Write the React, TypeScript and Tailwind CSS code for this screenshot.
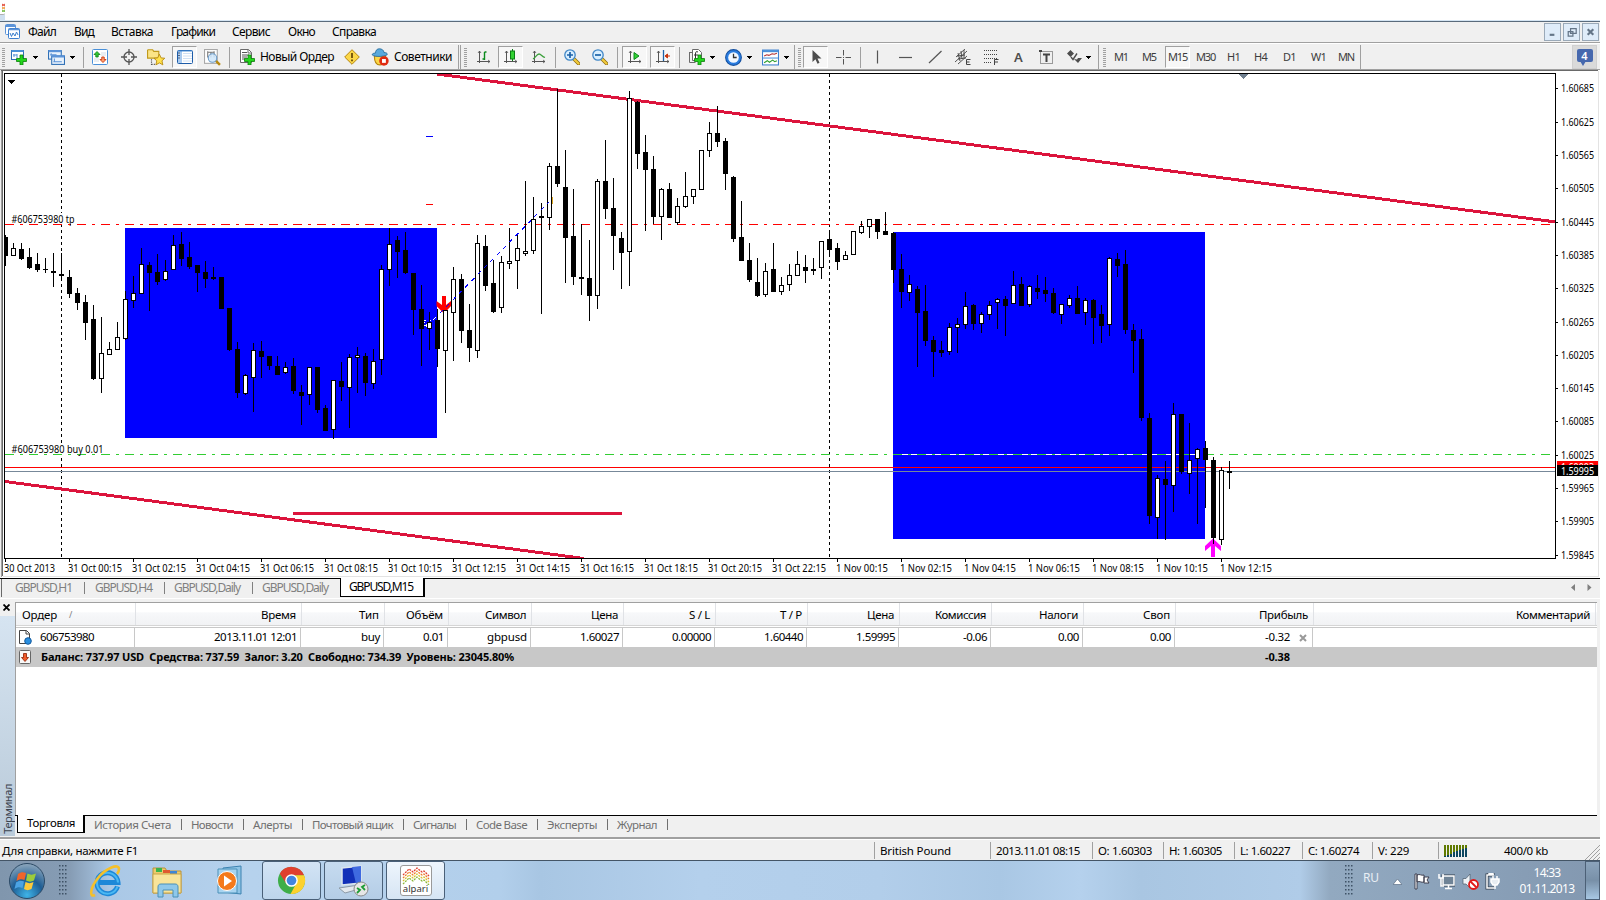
import { useLayoutEffect, useRef, useState } from 'react'
import type { ReactNode } from 'react'
import clsx from 'clsx'

type Candle = [number, number, number, number, number]

// high, body top, body bottom, low, 1 = bullish
const CANDLES: Candle[] = [
	[235, 237, 256, 266, 0], [243, 248, 256, 256, 1], [243, 249, 259, 260, 0], [248, 257, 268, 269, 0], [253, 264, 270, 272, 0],
	[258, 269, 270, 273, 0], [253, 271, 273, 287, 0], [253, 274, 276, 280, 0], [270, 277, 294, 298, 0], [288, 293, 303, 310, 0],
	[295, 302, 323, 340, 0], [305, 319, 379, 380, 0], [317, 353, 379, 393, 1], [342, 349, 355, 355, 1], [322, 337, 350, 350, 1],
	[291, 299, 339, 340, 1], [276, 293, 301, 308, 1], [248, 264, 294, 294, 1], [262, 265, 273, 311, 0], [254, 272, 282, 285, 0],
	[260, 271, 280, 281, 1], [235, 245, 270, 270, 1], [232, 244, 259, 266, 0], [242, 257, 267, 269, 0], [265, 265, 273, 292, 0],
	[261, 272, 279, 288, 0], [267, 277, 279, 280, 0], [277, 277, 309, 309, 0], [308, 308, 350, 351, 0], [342, 349, 393, 398, 0],
	[374, 375, 394, 395, 1], [343, 350, 378, 412, 1], [341, 351, 357, 378, 0], [356, 356, 366, 370, 0], [356, 366, 375, 375, 0],
	[362, 367, 373, 374, 1], [358, 366, 391, 394, 0], [385, 392, 396, 425, 0], [367, 367, 395, 405, 1], [367, 367, 410, 413, 0],
	[405, 408, 431, 431, 0], [380, 380, 430, 439, 1], [362, 381, 387, 401, 0], [354, 357, 388, 428, 1], [347, 355, 358, 393, 1],
	[353, 356, 383, 396, 0], [349, 361, 384, 389, 1], [265, 269, 360, 375, 1], [228, 244, 270, 286, 1], [236, 240, 252, 278, 0],
	[232, 250, 273, 274, 0], [273, 273, 310, 335, 0], [285, 309, 329, 366, 0], [312, 322, 329, 350, 1], [309, 320, 349, 367, 0],
	[310, 310, 351, 413, 1], [267, 279, 313, 361, 1], [274, 279, 331, 343, 0], [304, 330, 348, 362, 0], [235, 243, 351, 358, 1],
	[235, 246, 286, 291, 0], [260, 283, 312, 313, 0], [256, 262, 308, 313, 1], [228, 261, 264, 269, 1], [235, 248, 261, 289, 1],
	[181, 251, 254, 256, 1], [197, 219, 251, 254, 1], [203, 216, 218, 314, 0], [163, 166, 218, 230, 1], [89, 166, 184, 187, 0],
	[150, 187, 238, 283, 0], [189, 236, 277, 285, 0], [224, 277, 279, 295, 0], [240, 278, 296, 321, 0], [179, 181, 296, 309, 1],
	[140, 181, 209, 219, 0], [178, 208, 236, 270, 0], [232, 238, 253, 289, 0], [91, 98, 252, 286, 1], [101, 102, 154, 169, 0],
	[135, 152, 170, 231, 0], [156, 169, 217, 224, 0], [188, 189, 217, 240, 1], [183, 189, 218, 218, 0], [198, 206, 223, 225, 1],
	[172, 196, 207, 208, 1], [189, 189, 197, 204, 1], [150, 150, 190, 190, 1], [122, 133, 151, 157, 1], [106, 133, 142, 147, 0],
	[138, 141, 174, 190, 0], [176, 177, 239, 242, 0], [201, 237, 261, 261, 0], [243, 260, 280, 282, 0], [258, 282, 296, 297, 0],
	[263, 271, 295, 297, 1], [243, 269, 292, 292, 0], [277, 285, 292, 295, 1], [264, 275, 285, 291, 1], [251, 264, 276, 276, 1],
	[255, 267, 271, 283, 0], [258, 269, 271, 275, 0], [241, 241, 268, 279, 1], [230, 239, 250, 255, 0], [243, 248, 262, 270, 0],
	[251, 255, 260, 260, 1], [231, 231, 255, 255, 1], [221, 226, 233, 234, 1], [219, 219, 227, 238, 1], [219, 219, 232, 239, 0],
	[212, 231, 235, 235, 0], [232, 233, 270, 283, 0], [254, 269, 292, 308, 0], [275, 284, 293, 301, 1], [286, 289, 313, 367, 0],
	[285, 311, 341, 346, 0], [336, 340, 352, 377, 0], [341, 350, 353, 357, 0], [323, 327, 352, 355, 1], [318, 324, 328, 353, 1],
	[292, 306, 325, 329, 1], [304, 305, 324, 330, 0], [312, 314, 324, 333, 1], [301, 305, 315, 320, 1], [298, 299, 303, 329, 1],
	[296, 299, 306, 336, 0], [271, 285, 304, 304, 1], [277, 284, 306, 306, 0], [285, 286, 305, 307, 1], [275, 288, 292, 299, 0],
	[277, 290, 294, 302, 0], [288, 293, 313, 314, 0], [304, 304, 315, 324, 1], [295, 298, 306, 308, 1], [286, 298, 314, 314, 0],
	[298, 300, 313, 325, 1], [299, 300, 318, 344, 0], [305, 314, 326, 343, 0], [257, 258, 325, 336, 1], [253, 259, 266, 277, 0],
	[250, 264, 330, 334, 0], [324, 330, 341, 373, 0], [329, 339, 418, 421, 0], [413, 418, 516, 524, 0], [475, 478, 518, 539, 1],
	[461, 479, 485, 540, 0], [403, 414, 486, 512, 1], [414, 414, 472, 474, 0], [423, 460, 474, 494, 1], [448, 449, 459, 524, 1],
	[441, 448, 460, 508, 0], [457, 460, 538, 544, 0], [467, 470, 540, 545, 1], [461, 471, 473, 489, 0]
]

const PRICES: [string, number][] = [
	['1.60685', 88], ['1.60625', 122], ['1.60565', 155], ['1.60505', 188], ['1.60445', 222], ['1.60385', 255], ['1.60325', 288],
	['1.60265', 322], ['1.60205', 355], ['1.60145', 388], ['1.60085', 421], ['1.60025', 455], ['1.59965', 488], ['1.59905', 521], ['1.59845', 555]
]

const TIMES = [
	'30 Oct 2013', '31 Oct 00:15', '31 Oct 02:15', '31 Oct 04:15', '31 Oct 06:15', '31 Oct 08:15', '31 Oct 10:15', '31 Oct 12:15', '31 Oct 14:15', '31 Oct 16:15',
	'31 Oct 18:15', '31 Oct 20:15', '31 Oct 22:15', '1 Nov 00:15', '1 Nov 02:15', '1 Nov 04:15', '1 Nov 06:15', '1 Nov 08:15', '1 Nov 10:15', '1 Nov 12:15'
]

// Text that is tracked in or out until it takes exactly w pixels
function Label({ w, children, className }: { w: number; children: string; className?: string }) {
	const ref = useRef<HTMLSpanElement>(null)
	const [spacing, setSpacing] = useState(0)

	useLayoutEffect(() => {
		if (!ref.current) return
		const natural = ref.current.getBoundingClientRect().width
		setSpacing((w - natural) / children.length)
	}, [w, children])

	return (
		<span className={clsx('block shrink-0 whitespace-pre', className)} style={{ width: w }}>
			<span ref={ref} style={{ letterSpacing: spacing }}>
				{children}
			</span>
		</span>
	)
}

function Grip() {
	return (
		<svg width="3" height="19" className="shrink-0" shapeRendering="crispEdges">
			{Array.from({ length: 10 }, (_, i) => (
				<rect key={i} y={i * 2} width="3" height="1" fill="#a0a0a0" />
			))}
		</svg>
	)
}

function Divider({ className }: { className?: string }) {
	return <div className={clsx('h-[21px] w-px shrink-0 bg-[#a0a0a0]', className)} />
}

function Caret({ className }: { className?: string }) {
	return (
		<svg width="5" height="3" className={clsx('shrink-0', className)} shapeRendering="crispEdges">
			<path d="M0 0h5v1H0zM1 1h3v1H1zM2 2h1v1H2z" />
		</svg>
	)
}

function Icon({ className, children, size = 16 }: { className?: string; children: ReactNode; size?: number }) {
	return (
		<svg width={size} height={size} viewBox="0 0 16 16" fill="none" className={clsx('shrink-0', className)}>
			{children}
		</svg>
	)
}

function Pressed({ className, children }: { className?: string; children: ReactNode }) {
	return (
		<div
			className={clsx(
				'flex h-[22px] w-[25px] shrink-0 items-center justify-center border border-r-white border-b-white border-l-[#a0a0a0] border-t-[#a0a0a0] bg-[#f7f7f7]',
				className
			)}
		>
			{children}
		</div>
	)
}

const Plus = () => <path d="M9 6h3v3.500h3.500v3H12V16H9v-3.500H5.500v-3H9z" fill="#23d51c" stroke="#0a7d0a" strokeWidth=".8" />

const Axes = () => (
	<>
		<path d="M3.500 2v12M1 12.500h13" stroke="#555" />
		<path d="M2 4l1.500-2L5 4M12 11l2 1.500L12 14" stroke="#555" strokeWidth=".8" />
	</>
)

function ZoomIcon({ plus, className }: { plus?: boolean; className?: string }) {
	return (
		<Icon className={className}>
			<path d="M10 10l4.500 4.500" stroke="#8a6a14" strokeWidth="3.600" strokeLinecap="round" />
			<path d="M10 10l4.500 4.500" stroke="#f2cb3c" strokeWidth="2.200" strokeLinecap="round" />
			<circle cx="6" cy="6" r="5.200" fill="#d9efff" stroke="#3f86c6" strokeWidth="1.300" />
			<path d={plus ? 'M6 3v6M3 6h6' : 'M3 6h6'} stroke="#1c62a8" strokeWidth="1.700" />
		</Icon>
	)
}

function MenuBar() {
	return (
		<div className="flex h-5 items-center bg-[#f0f0f0] text-[12px] leading-5 text-black">
			<svg width="15" height="15" viewBox="0 0 15 15" fill="none" className="-mt-px ml-[5px]">
				<rect x=".5" y=".5" width="10" height="10" rx="1" fill="#fff" stroke="#5b93d8" />
				<path d="M.5 2h10" stroke="#5b93d8" strokeWidth="2" />
				<rect x="3.500" y="4.500" width="11" height="10" rx="1" fill="#fff" stroke="#3d7fce" />
				<path d="M3.500 5.500h11" stroke="#5b93d8" strokeWidth="1.500" />
				<path d="M5 9l1.500 3.500L8 9l2 3 1.500-4L13 11" stroke="#3d7fce" />
			</svg>
			<Label w={28} className="ml-[8px]">Файл</Label>
			<Label w={20} className="ml-[18px]">Вид</Label>
			<Label w={42} className="ml-[17px]">Вставка</Label>
			<Label w={44} className="ml-[18px]">Графики</Label>
			<Label w={38} className="ml-[17px]">Сервис</Label>
			<Label w={27} className="ml-[18px]">Окно</Label>
			<Label w={44} className="ml-[17px]">Справка</Label>
			<div className="ml-auto mr-px flex gap-[2px]">
				{['M5 11h5', 'M7 4.500h6v5H7zM4.500 7.500h5v5h-5z', 'M5 5l6 6M11 5l-6 6'].map((d, i) => (
					<div key={d} className="h-[18px] w-[17px] border border-[#9aa9b8] bg-[#dfecf9]">
						<svg width="15" height="16" viewBox="0 0 16 16" fill="none">
							<path d={d} stroke="#647587" strokeWidth={i === 1 ? 1.300 : 2.300} />
						</svg>
					</div>
				))}
			</div>
		</div>
	)
}

function Toolbar() {
	return (
		<div className="flex h-[25px] items-center bg-[#f0f0f0] pt-px text-[12px]">
			<div className="ml-[2px] flex"><Grip /></div>
			<Icon className="ml-[6px]">
				<rect x=".5" y="1.500" width="12" height="9" fill="#fff" stroke="#2f6fb5" />
				<path d="M.5 2h12" stroke="#4a90d9" strokeWidth="2" />
				<path d="M3 8V5M6 9V5M2 6h4" stroke="#5b93d8" />
				<Plus />
			</Icon>
			<Caret className="ml-[6px]" />
			<Icon size={17} className="ml-[10px]">
				<rect x=".5" y="1.500" width="12" height="8" fill="#e8f2fc" stroke="#2f6fb5" />
				<path d="M.5 2h12" stroke="#5b93d8" strokeWidth="2" />
				<rect x="3.500" y="6.500" width="12" height="8" fill="#e8f2fc" stroke="#2f6fb5" />
				<path d="M3.500 7h12" stroke="#5b93d8" strokeWidth="2" />
				<path d="M3 6V4M2 5.500h6M6 12V9M5 12h8" stroke="#5b93d8" />
			</Icon>
			<Caret className="ml-[5px]" />
			<Divider className="ml-[8px]" />
			<Icon className="ml-[8px]">
				<rect x=".5" y=".5" width="15" height="15" rx="1" fill="#fff" stroke="#4a90d9" />
				<path d="M9 4h5M9 6h5M2 10h5M2 12h5" stroke="#d4dde6" />
				<path d="M5 2.500L8 5.500H6.200V8H3.800V5.500H2z" fill="#32c832" stroke="#0b7d14" strokeWidth=".8" />
				<path d="M11 13.500L8 10.500h1.800V8h2.400v2.500H14z" fill="#ffa070" stroke="#c8340c" strokeWidth=".9" />
			</Icon>
			<Icon className="ml-[13px]">
				<circle cx="8" cy="8" r="5" stroke="#555" strokeWidth="1.300" />
				<path d="M8 0v6M8 10v6M0 8h6M10 8h6" stroke="#555" strokeWidth="1.300" />
			</Icon>
			<Icon size={18} className="ml-[10px]">
				<path d="M.5 2V9h10V3H6L5 1.500H1z" fill="#fbe487" stroke="#c09a1c" />
				<path d="M4 10v5M4 14.500h4" stroke="#555" strokeDasharray="1 1" />
				<path d="M11 5.500l1.500 3.300 3.300.3-2.500 2.300.8 3.600-3.100-1.800L7.900 15l.8-3.600-2.500-2.300 3.300-.3z" fill="#ffe14d" stroke="#b88a10" strokeWidth=".8" />
			</Icon>
			<Pressed className="ml-[7px]">
				<Icon>
					<rect x=".5" y="1.500" width="15" height="13" rx="1" fill="#fff" stroke="#1d5ca8" />
					<path d="M1 2h4v12H1z" fill="#a9cbf0" />
					<path d="M1 2h14" stroke="#4a90d9" />
					<path d="M1.500 4h1M1.500 6.500h1M1.500 9h1" stroke="#001" />
					<path d="M6 4.500h9M6 7h9M6 9.500h9M6 12h9" stroke="#cfe0f4" />
				</Icon>
			</Pressed>
			<Icon size={17} className="ml-[7px]">
				<rect x=".5" y=".5" width="12" height="13" fill="#fff" stroke="#a8a8a8" />
				<path d="M3.500 2v6M6.500 3v5M9.500 2v6M3 3h7" stroke="#777" />
				<path d="M11 11l4 4" stroke="#b88a10" strokeWidth="2.400" />
				<circle cx="8" cy="8.500" r="4" fill="#cfe6fa" fillOpacity=".85" stroke="#6b9bc8" />
			</Icon>
			<Divider className="ml-[8px]" />
			<Icon className="ml-[9px]">
				<path d="M1.500.5h8l3 3v10h-11z" fill="#fff" stroke="#6b6b6b" />
				<path d="M9 .5v3.500h3.500" stroke="#6b6b6b" />
				<path d="M3 3.500h5M3 6h7M3 8h5M3 10h3" stroke="#555" />
				<Plus />
			</Icon>
			<Label w={74} className="ml-[5px]">Новый Ордер</Label>
			<Icon className="ml-[10px]">
				<path d="M8 .7L15.300 8 8 15.300.7 8z" fill="#fbd748" stroke="#b8860b" />
				<path d="M8 4v5M8 10.500v1.700" stroke="#5a3c00" strokeWidth="1.600" />
			</Icon>
			<Icon size={18} className="ml-[11px]">
				<path d="M3 7c0 5 2 8 5 8s5-3 5-8z" fill="#fbd748" stroke="#b8860b" />
				<path d="M1 6c0-1 1.500-1.500 3-1.500C4 2 5.500.7 7.500.7s4 1.300 4 3.300c2 0 3 .8 3 1.500C14.500 7.500 3 8.500 1 6z" fill="#5aa9dc" stroke="#2a6f9f" strokeWidth=".8" />
				<circle cx="11.500" cy="11.500" r="4.200" fill="#e02a10" />
				<rect x="9.800" y="9.800" width="3.400" height="3.400" fill="#fff" />
			</Icon>
			<Label w={58} className="ml-[5px]">Советники</Label>
			<div className="ml-[6px] flex h-[25px] w-[3px] justify-between">
				<div className="w-px bg-[#a0a0a0]" />
				<div className="w-px bg-[#a0a0a0]" />
			</div>
			<div className="ml-[3px] flex"><Grip /></div>
			<Icon className="ml-[9px]">
				<Axes />
				<path d="M8.500 3v8M10.500 3H8.500M6.500 10h2" stroke="#0b8a1c" strokeWidth="1.400" />
			</Icon>
			<Pressed className="ml-[6px]">
				<Icon>
					<Axes />
					<path d="M9.500 0v12" stroke="#0b7d14" />
					<rect x="7.500" y="2" width="4" height="8" fill="#32d232" stroke="#0b7d14" />
				</Icon>
			</Pressed>
			<Icon className="ml-[8px]">
				<Axes />
				<path d="M2 10c2-1 4-5 6-5s3 2.500 6 3.500" stroke="#3aa03a" strokeWidth="1.300" />
			</Icon>
			<Divider className="ml-[8px]" />
			<ZoomIcon plus className="ml-[8px]" />
			<ZoomIcon className="ml-[12px]" />
			<Divider className="ml-[9px]" />
			<Pressed className="ml-[4px]">
				<Icon>
					<Axes />
					<path d="M7 3.500v7l5-3.500z" fill="#32d232" stroke="#0b8a1c" />
				</Icon>
			</Pressed>
			<Pressed className="ml-[3px]">
				<Icon>
					<Axes />
					<path d="M8.500 1v11" stroke="#1c62a8" strokeWidth="1.300" />
					<path d="M15 7h-3M12.500 5L10 7l2.500 2z" fill="#c8340c" stroke="#c8340c" />
				</Icon>
			</Pressed>
			<Divider className="ml-[4px]" />
			<Icon className="ml-[9px]">
				<path d="M3.500.5h6l3 3v8h-9z" fill="#fff" stroke="#6b6b6b" />
				<path d="M.5 3.500h3M.5 3v10.500h6" stroke="#6b6b6b" />
				<path d="M9 3c-2-1-2.500 0-2.500 2v5M5 6h4" stroke="#333" />
				<Plus />
			</Icon>
			<Caret className="ml-[5px]" />
			<Icon size={17} className="ml-[10px]">
				<circle cx="8" cy="8" r="7.400" fill="#2a7de0" stroke="#1450a0" />
				<circle cx="8" cy="8" r="5" fill="#f2f8ff" />
				<path d="M8 4.500V8h3" stroke="#333" strokeWidth="1.200" />
			</Icon>
			<Caret className="ml-[5px]" />
			<Icon size={17} className="ml-[10px]">
				<rect x=".5" y="1" width="15" height="14" fill="#fff" stroke="#3d7fce" />
				<path d="M.5 2h15" stroke="#4a90d9" strokeWidth="2" />
				<path d="M1 8.500h14" stroke="#4a90d9" />
				<path d="M2 6.500l2.500-1 2 .5 3-1.500 2 .5 2.500-1" stroke="#b03030" />
				<path d="M2 13l3-2 2 1.500 3-2 2 1.500 2-1" stroke="#2f9f2f" />
			</Icon>
			<Caret className="ml-[5px]" />
			<div className="ml-[5px] h-[25px] w-px bg-[#a0a0a0]" />
			<div className="ml-[3px] flex"><Grip /></div>
			<Pressed className="ml-[2px]">
				<Icon>
					<path d="M4.500 1v12l3-2.800 2 4.500 2-1-2-4.200h4z" fill="#4d4d4d" />
				</Icon>
			</Pressed>
			<Icon className="ml-[7px]">
				<path d="M8.500 1v5.500M8.500 10v5.500M1 8.500h5.500M10.500 8.500H16" stroke="#555" />
				<path d="M8 8h1v1H8z" fill="#555" />
			</Icon>
			<Divider className="ml-[9px]" />
			<Icon className="ml-[8px]">
				<path d="M8.500 1.500v13" stroke="#555" strokeWidth="1.200" />
			</Icon>
			<Icon className="ml-[13px]">
				<path d="M1 8.500h13" stroke="#555" strokeWidth="1.200" />
			</Icon>
			<Icon className="ml-[14px]">
				<path d="M1 14L13.500 2" stroke="#555" strokeWidth="1.200" />
			</Icon>
			<svg width="16" height="16" className="ml-[11px] shrink-0" fill="none" stroke="#444">
				<path d="M0 13L12 2M1 8l9-8M3 15l9-8M3 4l2 8M6 2l1 8M9 1v8M2 7l8-1M3 10l8-1" strokeWidth=".9" />
				<path d="M15.500 10.500h-4v5h4M11.500 13h3" />
			</svg>
			<svg width="16" height="16" className="ml-[13px] shrink-0" fill="none" stroke="#444">
				<path d="M0 1.500h14M0 5.500h14M0 9.500h14M0 13.500h8" strokeDasharray="1 1" />
				<path d="M14.500 10.500h-4v5.500M10.500 13h3.500" />
			</svg>
			<div className="ml-[14px] w-[11px] text-[13px] font-semibold leading-4 text-[#4d4d4d]">A</div>
			<svg width="15" height="16" className="ml-[14px] shrink-0" fill="none" stroke="#444">
				<rect x="1.500" y="2.500" width="12" height="12" strokeDasharray="1 1" />
				<path d="M4 5.500h7M7.500 5v8" strokeWidth="2" />
				<path d="M0 1h3v2H0z" fill="#444" stroke="none" />
			</svg>
			<svg width="15" height="16" className="ml-[13px] shrink-0" fill="#4d4d4d">
				<path d="M3.500 1L7 4.500 3.500 8 0 4.500zM11 9h4l-4 5-4-4 3 .5z" />
				<path d="M4 8l2 2.500 4-6" fill="none" stroke="#4d4d4d" strokeWidth="1.400" />
			</svg>
			<Caret className="ml-[4px]" />
			<div className="ml-[7px] h-[25px] w-px bg-[#a0a0a0]" />
			<div className="ml-[4px] flex"><Grip /></div>
			<div className="flex items-center text-[11px] text-[#3c3c3c]">
				<Label w={14} className="ml-[8px]">M1</Label>
				<Label w={14} className="ml-[14px]">M5</Label>
				<Pressed className="ml-[9px]"><Label w={19}>M15</Label></Pressed>
				<Label w={19} className="ml-[6px]">M30</Label>
				<Label w={13} className="ml-[12px]">H1</Label>
				<Label w={13} className="ml-[14px]">H4</Label>
				<Label w={13} className="ml-[16px]">D1</Label>
				<Label w={15} className="ml-[15px]">W1</Label>
				<Label w={16} className="ml-[12px]">MN</Label>
			</div>
			<div className="ml-[6px] h-[25px] w-px bg-[#a0a0a0]" />
			<div className="ml-auto mr-[3px] h-[24px] w-[25px] border border-[#d0d0d0] bg-[#dadada]">
				<div className="relative mx-auto mt-[3px] h-[13px] w-[16px] rounded-[2px] bg-[#4668ae] text-center text-[11px] font-semibold leading-[13px] text-white">
					4
					<svg width="6" height="5" className="absolute left-[3px] top-[12px]"><path d="M0 0h6L3 5z" fill="#4668ae" /></svg>
				</div>
			</div>
		</div>
	)
}

function Chart() {
	return (
		<svg width="1600" height="509" viewBox="0 70 1600 509" className="block shrink-0" shapeRendering="crispEdges" fontSize="10.500">
			<rect x="0" y="70" width="1600" height="509" fill="#fff" />
			<rect x="0" y="70" width="1" height="508" fill="#f0f0f0" />
			<rect x="1" y="70" width="1" height="507" fill="#a0a0a0" />
			<rect x="2" y="70" width="1" height="506" fill="#696969" />
			<rect x="1" y="70" width="1597" height="1" fill="#696969" />
			<rect x="1598" y="71" width="1" height="506" fill="#e3e3e3" />
			<rect x="3" y="576" width="1596" height="1" fill="#e3e3e3" />
			<rect x="0" y="578" width="1600" height="1" fill="#000" />

			<clipPath id="plot"><rect x="5" y="74" width="1550" height="484" /></clipPath>
			<g clipPath="url(#plot)">
				<rect x="125" y="228" width="312" height="210" fill="#00f" />
				<rect x="893" y="232" width="312" height="307" fill="#00f" />
				<path d="M61.500 74v484M829.500 74v484" stroke="#000" strokeDasharray="3 3" />
				<path d="M61.500 213v11M61.500 443v11" stroke="#fff" />
				<path d="M437 74L1556 222M5 481.500L584 558.500M293 513.500H622" stroke="#dc143c" strokeWidth="3" />
				<path d="M901 454.500h296" stroke="#fff" />
				<path d="M5 224.500h1550" stroke="#f00" strokeDasharray="9 6 3 6" />
				<path d="M5 454.500h1550" stroke="#32cd32" strokeDasharray="9 6 3 6" />
				<path d="M5 467.500h1550" stroke="#f00" />
				<path d="M5 471.500h1550" stroke="#778899" />
				<path d="M442 296h4v9l5-4v5l-7 7.500-7.500-7.500v-5l5.500 4z" fill="#f00" shapeRendering="auto" />
				{CANDLES.map(([high, top, bottom, low, up], i) => {
					const x = 5 + i * 8
					return (
						<g key={i}>
							<rect x={x} y={high} width="1" height={low - high} />
							<rect x={x - 2} y={top} width="5" height={bottom - top} />
							{up === 1 && <rect x={x - 1} y={top + 1} width="3" height={bottom - top - 2} fill="#fff" />}
						</g>
					)
				})}
				<path d="M440 313L549 202" stroke="#00f" strokeDasharray="4 5" />
				<path d="M424 320l2 1M430 320l1 1M433 320l3-3M424 322l1 1M424 326l2-1v2" fill="none" stroke="#fff" />
				<path d="M426 136.500h7" stroke="#00f" />
				<path d="M426 204.500h7" stroke="#f00" />
				<path d="M552.500 197v7" stroke="#daa520" />
				<path d="M1211 557h4v-11l6 5v-5l-8-7.500-8 7.500v5l6-5z" fill="#f0f" shapeRendering="auto" />
				<rect x="1213" y="536" width="1" height="8" />
				<path d="M8 80h7l-3.500 4zM9 81h5" fill="#000" />
				<path d="M1239 74h9l-4.500 5z" fill="#708090" />
			</g>
			<path d="M4.500 73.500H1555.500V558.500H4.500z" fill="none" stroke="#000" />

			<text x="11.500" y="222.500" textLength="63" lengthAdjust="spacingAndGlyphs">#606753980 tp</text>
			<text x="11.500" y="452.500" textLength="92" lengthAdjust="spacingAndGlyphs">#606753980 buy 0.01</text>

			{PRICES.map(([price, y]) => (
				<g key={price}>
					<rect x="1556" y={y} width="2" height="1" />
					<text x="1561" y={y + 4} textLength="33" lengthAdjust="spacingAndGlyphs">{price}</text>
				</g>
			))}
			<rect x="1557" y="461" width="41" height="5" fill="#f00" />
			<text x="1561" y="471" textLength="33" lengthAdjust="spacingAndGlyphs" fill="#fff">1.60003</text>
			<rect x="1557" y="465" width="41" height="11" fill="#000" />
			<text x="1561" y="475" textLength="33" lengthAdjust="spacingAndGlyphs" fill="#fff">1.59995</text>

			{TIMES.map((time, i) => (
				<g key={time}>
					<rect x={5 + i * 64} y="559" width="1" height="3" />
					<text x={4 + i * 64} y="571.500" textLength={i === 0 ? 51 : i > 12 ? 52 : 54} lengthAdjust="spacingAndGlyphs">{time}</text>
				</g>
			))}
		</svg>
	)
}

function ChartTabs() {
	return (
		<div className="flex h-[19px] bg-[#f0f0f0] text-[12px] leading-[17px] text-[#808080]">
			<div className="ml-px h-[18px] w-px bg-[#696969]" />
			<Label w={57} className="ml-[13px]">GBPUSD,H1</Label>
			<div className="ml-[12px] mt-[3px] h-[12px] w-px bg-[#808080]" />
			<Label w={57} className="ml-[10px]">GBPUSD,H4</Label>
			<div className="ml-[12px] mt-[3px] h-[12px] w-px bg-[#808080]" />
			<Label w={66} className="ml-[9px]">GBPUSD,Daily</Label>
			<div className="ml-[12px] mt-[3px] h-[12px] w-px bg-[#808080]" />
			<Label w={66} className="ml-[9px]">GBPUSD,Daily</Label>
			<div className="-mt-px ml-[12px] h-[19px] w-[85px] border-b border-r-2 border-l border-black bg-white pl-[8px] text-black">
				<Label w={64}>GBPUSD,M15</Label>
			</div>
			<svg width="21" height="8" className="ml-auto mr-[8px] mt-[5px]" fill="#808080">
				<path d="M4 0v7L0 3.500zM16.500 0v7l4-3.500z" />
			</svg>
		</div>
	)
}

const cell = 'flex shrink-0 justify-end border-r'

function Head({ className, w, children }: { className: string; w: number; children: string }) {
	return (
		<div className={clsx(cell, 'border-[#e0e2e6] pr-[5px]', className)}>
			<Label w={w}>{children}</Label>
		</div>
	)
}

function Cell({ className, w, children }: { className: string; w: number; children: string }) {
	return (
		<div className={clsx(cell, 'border-[#c8c8c8] pr-[3px]', className)}>
			<Label w={w}>{children}</Label>
		</div>
	)
}

function Terminal() {
	return (
		<div className="flex h-[239px] shrink-0 border-t border-white bg-[#f0f0f0] text-[11.500px] text-black">
			<div className="flex w-[15px] shrink-0 flex-col">
				<svg width="7" height="7" className="ml-[3px] mt-[5px]" fill="none"><path d="M.5.500l6 6M6.500.500l-6 6" stroke="#000" strokeWidth="1.800" /></svg>
				<div className="mt-[5px] flex h-[220px] items-end justify-center bg-gradient-to-b from-[#d6e4f1] to-[#b9cad9] pb-[2px]">
					<div className="rotate-180 text-[11px] leading-[15px] text-[#3c4450] [writing-mode:vertical-rl] tracking-[-0.4px]">Терминал</div>
				</div>
			</div>
			<div className="mt-[3px] flex w-[1582px] flex-col">
				<div className="flex h-[213px] flex-col border-l border-t border-[#a0a0a0] bg-white">
					<div className="flex h-[23px] border-b border-[#d5d5d5] bg-gradient-to-b from-white from-40% via-[#f7f8fa] via-45% to-[#f1f2f4] leading-[24px]">
						<div className="flex w-[120px] shrink-0 border-r border-[#e0e2e6] pl-[6px]">
							<Label w={35}>Ордер</Label>
							<span className="ml-[12px] text-[9px] text-[#808080]">/</span>
						</div>
						<Head className="w-[166px]" w={35}>Время</Head>
						<Head className="w-[83px]" w={20}>Тип</Head>
						<Head className="w-[64px]" w={37}>Объём</Head>
						<Head className="w-[83px]" w={41}>Символ</Head>
						<Head className="w-[92px]" w={27}>Цена</Head>
						<Head className="w-[92px]" w={21}>S / L</Head>
						<Head className="w-[92px]" w={22}>T / P</Head>
						<Head className="w-[92px]" w={27}>Цена</Head>
						<Head className="w-[92px]" w={51}>Комиссия</Head>
						<Head className="w-[92px]" w={39}>Налоги</Head>
						<Head className="w-[92px]" w={27}>Своп</Head>
						<Head className="w-[138px]" w={49}>Прибыль</Head>
						<Head className="w-[282px]" w={74}>Комментарий</Head>
					</div>
					<div className="mt-px flex h-[21px] border-t border-[#c8c8c8] leading-[18px]">
						<div className="flex w-[119px] shrink-0 border-r border-[#c8c8c8] pl-[3px] pt-px">
							<svg width="13" height="16" viewBox="0 0 13 16" fill="none">
								<path d="M.5 1.500h7l3 3v10H.5z" fill="#fff" stroke="#444" />
								<path d="M7 1.500V5h3.500" stroke="#444" />
								<circle cx="9" cy="12" r="3.300" fill="#2a8fe0" stroke="#145a9c" />
							</svg>
							<Label w={54} className="-mt-px ml-[8px]">606753980</Label>
						</div>
						<Cell className="w-[166px]" w={83}>2013.11.01 12:01</Cell>
						<Cell className="w-[83px]" w={19}>buy</Cell>
						<Cell className="w-[64px]" w={21}>0.01</Cell>
						<Cell className="w-[83px]" w={40}>gbpusd</Cell>
						<Cell className="w-[92px]" w={39}>1.60027</Cell>
						<Cell className="w-[92px]" w={39}>0.00000</Cell>
						<Cell className="w-[92px]" w={39}>1.60440</Cell>
						<Cell className="w-[92px]" w={39}>1.59995</Cell>
						<Cell className="w-[92px]" w={24}>-0.06</Cell>
						<Cell className="w-[92px]" w={21}>0.00</Cell>
						<Cell className="w-[92px]" w={21}>0.00</Cell>
						<div className="flex w-[138px] justify-end border-r border-[#c8c8c8] pr-[5px]">
							<Label w={25}>-0.32</Label>
							<svg width="8" height="8" className="ml-[9px] mt-[6px]" fill="none"><path d="M1 1l6 6M7 1L1 7" stroke="#999" strokeWidth="2" /></svg>
						</div>
					</div>
					<div className="-mt-px flex h-[20px] items-center bg-[#c8c8c8] pl-[3px] text-[11px] font-bold leading-[20px]">
						<svg width="12" height="14" viewBox="0 0 12 14" fill="none">
							<rect x=".5" y=".5" width="11" height="13" rx="1" fill="#f8f8f8" stroke="#666" />
							<path d="M6 11.500L2.500 7.500h2v-4h3v4h2z" fill="#f05a28" stroke="#8c1d00" strokeWidth=".8" />
						</svg>
						<Label w={473} className="ml-[10px]">Баланс: 737.97 USD  Средства: 737.59  Залог: 3.20  Свободно: 734.39  Уровень: 23045.80%</Label>
						<Label w={25} className="ml-auto mr-[307px]">-0.38</Label>
					</div>
				</div>
				<TerminalTabs />
			</div>
		</div>
	)
}

function TerminalTabs() {
	const tabs: [string, number][] = [
		['История Счета', 77], ['Новости', 42], ['Алерты', 39], ['Почтовый ящик', 81], ['Сигналы', 43], ['Code Base', 51], ['Эксперты', 50], ['Журнал', 40]
	]

	return (
		<div className="flex h-[20px] border-t border-black pl-[2px] leading-[16px] text-[#707070]">
			<div className="-mt-px h-[18px] w-[68px] border-b border-r-2 border-l border-black bg-white pl-[9px] text-black">
				<Label w={48}>Торговля</Label>
			</div>
			{tabs.map(([name, width]) => (
				<div key={name} className="flex h-[17px] items-center">
					<Label w={width} className="mr-[10px] ml-[9px]">{name}</Label>
					<div className="h-[11px] w-px bg-[#707070]" />
				</div>
			))}
		</div>
	)
}

function StatusBar() {
	const quotes: [string, string, number][] = [
		['British Pound', 'w-[116px]', 71], ['2013.11.01 08:15', 'w-[102px]', 84], ['O: 1.60303', 'w-[71px]', 54], ['H: 1.60305', 'w-[71px]', 53],
		['L: 1.60227', 'w-[68px]', 50], ['C: 1.60274', 'w-[70px]', 51], ['V: 229', 'w-[66px]', 31]
	]

	return (
		<div className="flex h-[20px] shrink-0 items-center bg-[#f0f0f0] pt-px text-[11.500px] leading-5 text-black">
			<Label w={136} className="ml-[2px]">Для справки, нажмите F1</Label>
			<div className="ml-[736px] flex">
				{quotes.map(([text, width, w]) => (
					<div key={text} className={clsx('flex h-[17px] items-center border-l border-[#a0a0a0] pl-[5px]', width)}>
						<Label w={w}>{text}</Label>
					</div>
				))}
			</div>
			<div className="flex h-[17px] items-center border-l border-[#a0a0a0] pl-[5px]">
				<svg width="24" height="12" shapeRendering="crispEdges">
					{[1, 2, 3, 5, 6, 7, 8, 9].map((h, i) => (
						<g key={i}>
							<rect x={i * 3} width="2" height={12 - h} fill="#5f7a00" />
							<rect x={i * 3} y={12 - h} width="2" height={h} fill="#0c4660" />
						</g>
					))}
				</svg>
			</div>
			<Label w={44} className="ml-[36px]">400/0 kb</Label>
			<svg width="15" height="15" className="ml-auto self-end" stroke="#a0a0a0">
				<path d="M0 15L15 0M4 15L15 4M8 15L15 8M12 15l3-3" />
			</svg>
		</div>
	)
}

function Dots() {
	return (
		<svg width="8" height="31" className="shrink-0">
			{Array.from({ length: 24 }, (_, i) => (
				<rect key={i} x={(i % 3) * 3} y={Math.floor(i / 3) * 4} width="1.500" height="1.500" fill="#3f5266" />
			))}
		</svg>
	)
}

function Taskbar() {
	return (
		<div className="flex h-[39px] shrink-0 items-center overflow-hidden bg-[linear-gradient(90deg,#8096ad_0,#869cb4_70px,#aac8e6_110px,#b6d2ed_250px,#b2cfeb_500px,#a8c6e3_540px,#b4d0ec_700px,#b2ceea_880px,#a9c7e4_1000px,#b5d1ed_1080px,#a9c6e2_1140px,#b0cce8_1300px,#92a9c0_1330px,#8ba2ba_1450px,#8398b0_1600px)]">
			<svg width="38" height="38" viewBox="0 0 38 38" className="ml-[8px] shrink-0">
				<defs>
					<radialGradient id="orb" cx=".5" cy=".9" r=".9">
						<stop offset="0" stopColor="#3fb4e8" />
						<stop offset=".5" stopColor="#1d5d94" />
						<stop offset="1" stopColor="#8fa8bd" />
					</radialGradient>
				</defs>
				<circle cx="19" cy="19" r="17.500" fill="url(#orb)" stroke="#2c4a66" />
				<path d="M10 12c3-2 5-2 8-1l-1.500 7c-3-1-5-1-8 1z" fill="#f0652a" />
				<path d="M19.500 11.500c3 1.500 5 1.500 8.500 0L26 18.500c-3 1.500-5 1.500-8 0z" fill="#9ccc3c" />
				<path d="M8 20.500c3-2 5-2 8-1L14.500 26c-3-1-5-1-8 1z" fill="#4ba3e3" />
				<path d="M17.500 20c3 1.500 5 1.500 8 0l-2 7c-3 1.500-5 1.500-7.500 0z" fill="#fcc93a" />
			</svg>
			<div className="ml-[13px] flex"><Dots /></div>
			<svg width="34" height="34" viewBox="0 0 34 34" fill="none" className="ml-[22px] shrink-0">
				<path d="M28.500 22.500a10.500 10.500 0 1 1 .5-4H9" stroke="#1e88d8" strokeWidth="5" />
				<path d="M28.500 22.500a10.500 10.500 0 1 1 .5-4" stroke="#4bb8f2" strokeWidth="2" />
				<path d="M6 31C0 34 1 24 9 14S30-1 30 5c0 2-1 4-2 5" stroke="#f5c02a" strokeWidth="2.600" />
			</svg>
			<svg width="34" height="34" viewBox="0 0 34 34" className="ml-[28px] shrink-0">
				<path d="M2 4h12l2 3h14v22H2z" fill="#eccb6c" stroke="#b8923a" />
				<path d="M5 4h6v4H5z" fill="#3cb44b" /><path d="M12 6h7v3h-7z" fill="#e05a30" /><path d="M19 7h7v3h-7z" fill="#3f86d6" />
				<path d="M2 10h28v19H2z" fill="#f8e49a" stroke="#c9a548" />
				<path d="M7 33V23c0-2 1-3 3-3h14c2 0 3 1 3 3v10h-5v-7H12v7z" fill="#8fc8ea" stroke="#4a90b8" />
			</svg>
			<svg width="30" height="32" viewBox="0 0 30 32" className="ml-[30px] shrink-0">
				<path d="M8 3l18-2v28l-18-2z" fill="#8ec4e6" stroke="#3c82b0" />
				<path d="M3 4l19 0v24H3z" fill="#a8d4f0" stroke="#4a90b8" />
				<circle cx="12" cy="16" r="9.500" fill="#f47a1c" stroke="#fff" />
				<path d="M9 10.500v11l8-5.500z" fill="#fff" />
			</svg>
			<div className="ml-[17px] flex h-[39px] w-[59px] items-center justify-center rounded-[3px] border border-[#4a6078] bg-gradient-to-b from-[#d3e4f5] to-[#bdd5ec]">
				<svg width="29" height="29" viewBox="0 0 30 30">
					<circle cx="15" cy="15" r="14" fill="#3fae49" />
					<path d="M2.900 8A14 14 0 0 1 28 9.500H15L9.500 18z" fill="#e0402f" />
					<path d="M28 9.500A14 14 0 0 1 14 29l6.500-12L19 9.500z" fill="#fcd12e" />
					<circle cx="15" cy="15" r="6.500" fill="#fff" />
					<circle cx="15" cy="15" r="5" fill="#4285e0" />
				</svg>
			</div>
			<div className="ml-[3px] flex h-[39px] w-[59px] items-center justify-center rounded-[3px] border border-[#4a6078] bg-gradient-to-b from-[#c6dbf0] to-[#b4cde6]">
				<svg width="32" height="32" viewBox="0 0 32 32">
					<path d="M4 3l19-2v17L4 20z" fill="#1230b8" stroke="#dce6ee" strokeWidth="1.500" />
					<path d="M14 2l9-1v17l-5 .5z" fill="#3f6ae0" />
					<path d="M1 23l20-3 4 3-18 5z" fill="#e4e9ee" stroke="#8d9aa6" />
					<circle cx="23" cy="24" r="7" fill="#e6e6e6" stroke="#8a8a8a" />
					<path d="M19 23l3 2-3 3M27 20l-3 2 3 3" stroke="#1d9c34" strokeWidth="1.800" fill="none" />
				</svg>
			</div>
			<div className="ml-[3px] flex h-[39px] w-[59px] items-center justify-center rounded-[3px] border border-[#4a6078] bg-gradient-to-b from-[#eef5fc] to-[#d6e5f4]">
				<div className="flex h-[31px] w-[32px] flex-col items-center rounded-[3px] border border-[#9a9a9a] bg-white">
					<svg width="28" height="19" fill="none" strokeWidth="1.300" strokeDasharray="2 1">
						<path d="M1 9L7 3l4 3 4-4 5 4 2-1 5 5" stroke="#e0402f" />
						<path d="M1 12l6-6 4 3 4-4 5 4 2-1 5 5" stroke="#ee7d2a" />
						<path d="M1 15l6-6 4 3 4-4 5 4 2-1 5 5" stroke="#d8c030" />
						<path d="M1 18l6-6 4 3 4-4 5 4 2-1 5 5" stroke="#8cb83a" />
					</svg>
					<span className="text-[9.500px] leading-[8px] text-[#333]">alpari</span>
				</div>
			</div>
			<div className="ml-[900px] flex"><Dots /></div>
			<div className="-mt-[5px] ml-[10px] w-[16px] text-[12px] text-[#e8eef4]"><Label w={16}>RU</Label></div>
			<svg width="9" height="6" className="ml-[14px] mt-[2px] shrink-0"><path d="M0 5.500L4.500 0 9 5.500z" fill="#fff" stroke="#5c7086" strokeWidth=".7" /></svg>
			<svg width="16" height="17" className="ml-[12px] mt-[2px] shrink-0" fill="#fff" stroke="#334" strokeWidth=".9">
				<path d="M1 1h2v15H1zM3 2c3-1.500 4 1 7 0v7c-3 1-4-1.500-7 0zM10 4h5l-2 3 2 3h-5z" />
			</svg>
			<svg width="17" height="17" className="ml-[8px] mt-[2px] shrink-0" fill="none">
				<rect x="5" y="3" width="11" height="9" fill="#6f8396" stroke="#333f4c" strokeWidth="3" />
				<rect x="5" y="3" width="11" height="9" fill="#6f8396" stroke="#fff" strokeWidth="1.500" />
				<path d="M7 15.500h7M10.500 12v3" stroke="#fff" strokeWidth="1.500" />
				<path d="M1 1v4h4V1M3 5v8h3" stroke="#fff" strokeWidth="1.500" />
			</svg>
			<svg width="17" height="17" className="ml-[7px] mt-[2px] shrink-0" fill="none">
				<path d="M1 5.500h3L8 1v14l-4-4H1z" fill="#eef2f6" stroke="#4c5c6c" strokeWidth=".7" />
				<circle cx="11.500" cy="11.500" r="4.500" fill="#fff" stroke="#e01818" strokeWidth="1.800" />
				<path d="M8.500 8.500l6 6" stroke="#e01818" strokeWidth="1.800" />
			</svg>
			<svg width="16" height="17" className="ml-[6px] mt-[2px] shrink-0" fill="none" stroke="#fff" strokeWidth="1.500">
				<path d="M9 2H2v13h7M4 2V.5h4V2" stroke="#333f4c" strokeWidth="3" />
				<path d="M9 2H2v13h7M4 2V.5h4V2" />
				<path d="M8 3v3M12 3v3" />
				<path d="M6 6h8v3l-2 3H8L6 9zM10 12v4" fill="#e8edf2" />
			</svg>
			<div className="ml-[18px] flex w-[56px] flex-col items-center text-[12px] leading-[16px] text-white">
				<Label w={27}>14:33</Label>
				<Label w={55}>01.11.2013</Label>
			</div>
			<div className="ml-auto h-[39px] w-[15px] shrink-0 border border-[#4c6076] bg-gradient-to-b from-[#8ca4bc] via-[#7890a8] to-[#a8c8e4]" />
		</div>
	)
}

export default function App() {
	return (
		<div className="h-[900px] w-[1606px] overflow-hidden bg-white font-['Noto_Sans','Open_Sans',sans-serif]">
			<div className="flex h-[900px] w-[1600px] flex-col">
				<div className="flex h-[21px] shrink-0 border-b border-[#d5e5f3]">
					<div className="flex w-[5px] flex-col justify-between bg-[#cfe0f0]">
						<div className="flex h-[15px] items-center rounded-br-[2px] border-b border-[#b0b0b0] bg-white pl-[2px]">
							<svg width="3" height="9" strokeWidth="1" fill="none">
								<path d="M0 1l3 2M0 3l3-2" stroke="#e0402f" />
								<path d="M0 4l3 2M0 6l3-2" stroke="#ee9a3a" />
								<path d="M0 7l3 2M0 9l3-2" stroke="#6cb83a" />
							</svg>
						</div>
					</div>
				</div>
				<div className="h-px shrink-0 bg-[#5a6b7c]" />
				<MenuBar />
				<div className="h-[2px] shrink-0 border-t border-[#a0a0a0] bg-white" />
				<Toolbar />
				<div className="h-px shrink-0 bg-[#a0a0a0]" />
				<Chart />
				<ChartTabs />
				<Terminal />
				<div className="h-[3px] shrink-0 border-b border-white bg-[#a0a0a0]" />
				<StatusBar />
				<div className="h-px shrink-0 bg-[#445566]" />
				<Taskbar />
			</div>
		</div>
	)
}
